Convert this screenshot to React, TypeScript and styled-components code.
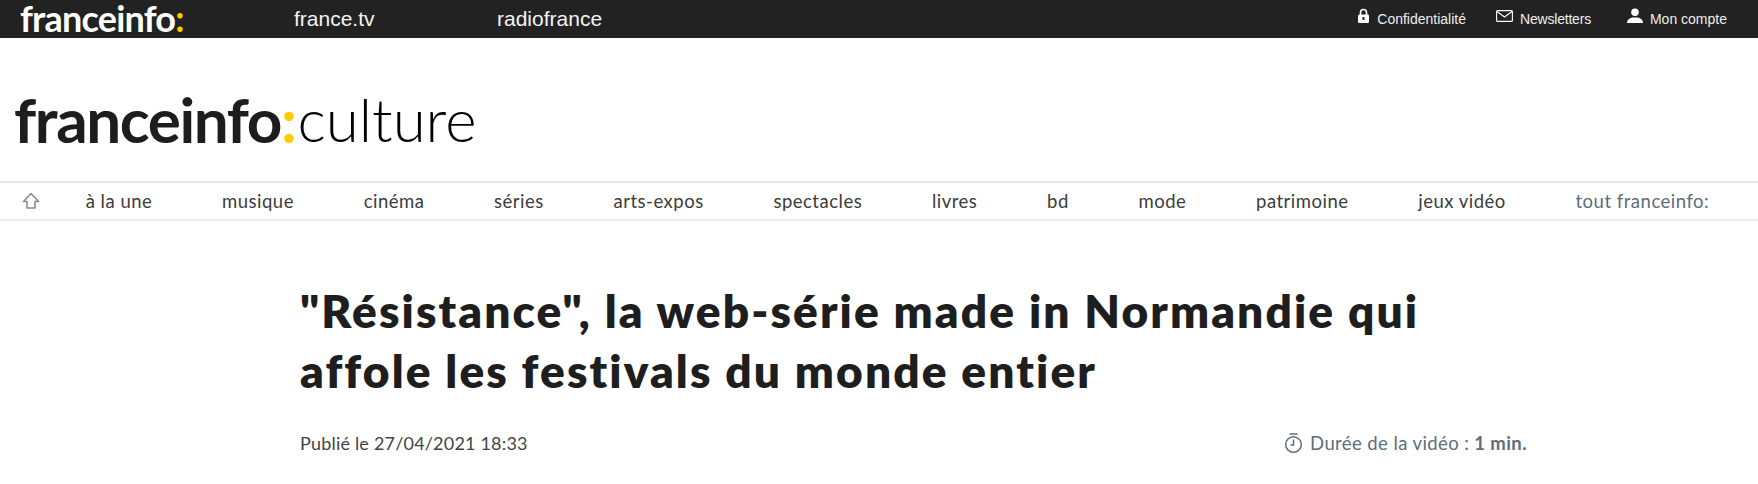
import React from "react";
import styled, { createGlobalStyle } from "styled-components";

const Global = createGlobalStyle`
  html, body { margin: 0; padding: 0; background: #fff; }
  body { font-family: "Lato", "Liberation Sans", sans-serif; width: 1758px; height: 484px; overflow: hidden; }
`;

const TopBar = styled.header`
  height: 38px;
  background: #222;
  display: flex;
  align-items: center;
  color: #fff;
  padding: 0 20px;
`;
const TopLogo = styled.div`
  font: 700 36px/38px "Lato", sans-serif;
  letter-spacing: -0.8px;
  width: 274px;
  height: 38px;
  padding-bottom: 3px;
  box-sizing: border-box;
  display: flex;
  align-items: center;
  white-space: nowrap;
`;
const Dots = styled.span`
  color: #fc0;
`;
const PartnerLink = styled.a<{ $w: number }>`
  font: 21px/38px "Liberation Sans", sans-serif;
  width: ${(p) => p.$w}px;
  color: #f4f4f4;
`;
const Tools = styled.div`
  margin-left: auto;
  display: flex;
  align-items: center;
  gap: 30px;
  padding-right: 11px;
`;
const Tool = styled.a<{ $tight?: boolean; $push?: number }>`
  display: flex;
  align-items: center;
  gap: 7px;
  font: 14px/38px "Liberation Sans", sans-serif;
  letter-spacing: ${(p) => (p.$tight ? "-0.2px" : "0")};
  margin-left: ${(p) => p.$push ?? 0}px;
  color: #eee;
  svg { position: relative; top: -3px; flex: none; }
`;
const Brand = styled.div`
  height: 143px;
  display: flex;
  align-items: center;
  padding: 19px 0 0 14px;
  box-sizing: border-box;
  line-height: 1;
  color: #1d1d1d;
  white-space: nowrap;
`;
const BrandBold = styled.span`
  font-size: 62px;
  font-weight: 700;
  letter-spacing: -1.4px;
`;
const BrandLight = styled.span`
  font-size: 60px;
  font-weight: 300;
  color: #000;
  margin-left: 2px;
`;
const Nav = styled.nav`
  height: 40px;
  border-top: 2px solid #e6e6e6;
  border-bottom: 2px solid #ececec;
  box-sizing: border-box;
  display: flex;
  align-items: center;
  padding-left: 22px;
  gap: 69.7px;
  font-size: 18.5px;
  letter-spacing: 0.5px;
`;
const NavItem = styled.a<{ $muted?: boolean }>`
  color: ${(p) => (p.$muted ? "#5d6d7c" : "#3c3c3c")};
  white-space: nowrap;
`;
const HomeIcon = styled.svg`
  margin-right: -24px;
  flex: none;
`;
const Article = styled.main`
  padding: 60px 0 0 300px;
  box-sizing: border-box;
`;
const Title = styled.h1`
  margin: 0;
  font: 800 46px/60px "Lato", sans-serif;
  color: #1e1e1e;
  letter-spacing: 2.1px;
  white-space: nowrap;
`;
const Meta = styled.div`
  margin-top: 30px;
  display: flex;
  justify-content: space-between;
  align-items: center;
  width: 1227px;
  font-size: 18px;
  line-height: 24px;
`;
const Published = styled.span`
  color: #444;
  letter-spacing: 0.2px;
`;
const Duration = styled.span`
  display: flex;
  align-items: center;
  gap: 7px;
  color: #5d6d7c;
  font-size: 18.5px;
  letter-spacing: 0.4px;
  b { font-weight: 700; }
`;

export default function App() {
  const items = ["à la une", "musique", "cinéma", "séries", "arts-expos", "spectacles", "livres", "bd", "mode", "patrimoine", "jeux vidéo"];
  return (
    <>
      <Global />
      <TopBar>
        <TopLogo><span>franceinfo<Dots>:</Dots></span></TopLogo>
        <PartnerLink $w={203}>france.tv</PartnerLink>
        <PartnerLink $w={120}>radiofrance</PartnerLink>
        <Tools>
          <Tool>
            <svg width="13" height="16" viewBox="0 0 13 16"><path d="M3.500 7V4.500a3 3 0 0 1 6 0V7" fill="none" stroke="#fff" strokeWidth="1.6" /><rect x="1" y="6.500" width="11" height="8.500" rx="1.200" fill="#fff" /><rect x="5.500" y="9" width="2" height="3" fill="#222" /></svg>
            Confidentialité
          </Tool>
          <Tool $tight>
            <svg width="17" height="12" viewBox="0 0 17 12" fill="none" stroke="#fff" strokeWidth="1.1"><rect x="0.6" y="0.6" width="15.8" height="10.8" rx="1" /><path d="M1 1.500l7.500 5.500L16 1.500" /></svg>
            Newsletters
          </Tool>
          <Tool $push={6}>
            <svg width="16" height="16" viewBox="0 0 16 16" fill="#fff"><circle cx="8" cy="4.300" r="3.800" /><path d="M0 15c0-3.500 3-5 5.500-5.500h5C13 10 16 11.500 16 15z" /></svg>
            Mon compte
          </Tool>
        </Tools>
      </TopBar>
      <Brand>
        <BrandBold>franceinfo<Dots>:</Dots></BrandBold>
        <BrandLight>culture</BrandLight>
      </Brand>
      <Nav>
        <HomeIcon width="18" height="18" viewBox="0 0 18 18" fill="none" stroke="#8a8a8a" strokeWidth="1.6">
          <path d="M9 1.500L1.500 9.500H5V16H13V9.500H16.500z" strokeLinejoin="round" />
        </HomeIcon>
        {items.map((t) => <NavItem key={t}>{t}</NavItem>)}
        <NavItem $muted>tout franceinfo:</NavItem>
      </Nav>
      <Article>
        <Title>"Résistance", la web-série made in Normandie qui<br />affole les festivals du monde entier</Title>
        <Meta>
          <Published>Publié le 27/04/2021 18:33</Published>
          <Duration>
            <svg width="19" height="21" viewBox="0 0 19 21" fill="none" stroke="#5d6d7c" strokeWidth="1.500"><path d="M5.500 1h8" /><circle cx="9.500" cy="11.500" r="7.800" /><path d="M9.500 6.500v5.500h-3" /></svg>
            <span>Durée de la vidéo : <b>1 min.</b></span>
          </Duration>
        </Meta>
      </Article>
    </>
  );
}
